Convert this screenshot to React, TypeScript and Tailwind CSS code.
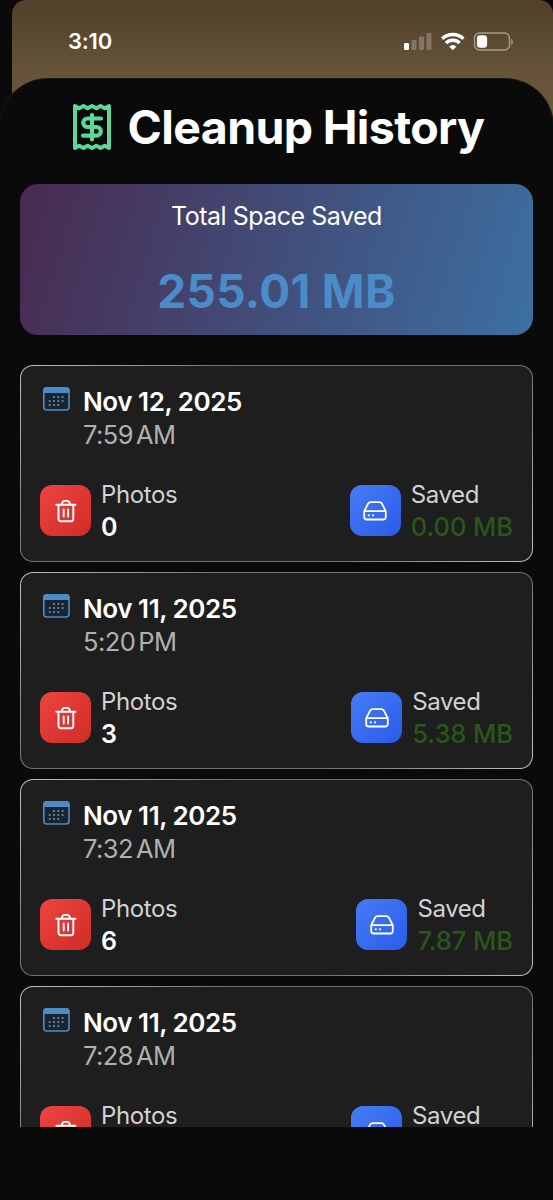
import React from 'react';

const records = [
  { date: 'Nov 12, 2025', time: '7:59', period: 'AM', photos: 0, saved: '0.00 MB' },
  { date: 'Nov 11, 2025', time: '5:20', period: 'PM', photos: 3, saved: '5.38 MB' },
  { date: 'Nov 11, 2025', time: '7:32', period: 'AM', photos: 6, saved: '7.87 MB' },
  { date: 'Nov 11, 2025', time: '7:28', period: 'AM', photos: 4, saved: '6.53 MB' },
];

// x, y of the day dots inside the calendar icon
const days = [
  [11, 10], [15.3, 10], [19.6, 10],
  [6.7, 14], [11, 14], [15.3, 14], [19.6, 14],
  [6.7, 18], [11, 18], [15.3, 18],
];

const ReceiptIcon = () => (
  <svg className="-mt-[2px]" width="40" height="48" viewBox="0 0 40 48" fill="none" stroke="#5fd69c" strokeWidth="4" strokeLinejoin="round" strokeLinecap="round">
    <path d="M3 3v42l4.200-2.200 4.300 2.200 4.200-2.200 4.300 2.200 4.300-2.200 4.200 2.200 4.300-2.200L37 45V3l-4.200 2.200L28.500 3l-4.200 2.200L20 3l-4.300 2.200L11.500 3 7.200 5.200z" />
    <path d="M29 15.500H15.500a4.200 4.200 0 0 0 0 8.500h9a4.300 4.300 0 0 1 0 8.600H11M20 12v24.500" strokeWidth="4.200" />
  </svg>
);

const CalendarIcon = () => (
  <svg width="27" height="24" viewBox="0 0 27 24" fill="none">
    <rect x="0.800" y="0.800" width="25.200" height="22.200" rx="3" fill="#1b242d" stroke="#4a8bc8" strokeWidth="1.600" />
    <path d="M0 6V4a4 4 0 0 1 4-4h18.800a4 4 0 0 1 4 4v2z" fill="#4a8bc8" />
    {days.map(([x, y]) => (
      <circle key={`${x}-${y}`} cx={x} cy={y} r="1.100" fill="#5f8fb8" />
    ))}
  </svg>
);

const TrashIcon = () => (
  <svg width="22" height="24" viewBox="0 0 22 24" fill="none" stroke="white" strokeWidth="1.900" strokeLinecap="round" strokeLinejoin="round">
    <path d="M1.300 5.700h19.200M6.500 5.400l1-2.300a2 2 0 0 1 1.800-1.200h3.200a2 2 0 0 1 1.800 1.200l1 2.300M3.500 5.900v13.900a2.500 2.500 0 0 0 2.500 2.500h9.800a2.500 2.500 0 0 0 2.500-2.500V5.900M8.700 10.500v7M13.100 10.500v7" />
  </svg>
);

const DriveIcon = () => (
  <svg width="24" height="20" viewBox="0 0 24 20" fill="none" stroke="white" strokeWidth="1.800" strokeLinecap="round" strokeLinejoin="round">
    <path d="M1.200 11v5a2.500 2.500 0 0 0 2.500 2.500h16.600a2.500 2.500 0 0 0 2.500-2.500v-5a3 3 0 0 0-.3-1.300l-3.600-7a3 3 0 0 0-2.700-1.600H7.800a3 3 0 0 0-2.700 1.600l-3.600 7a3 3 0 0 0-.3 1.300zM1.500 10.200h21" />
    <path d="M5.800 14.300h.01M10 14.300h.01" strokeWidth="2.200" />
  </svg>
);

const StatusIcons = () => (
  <svg width="112" height="20" viewBox="0 0 112 20" fill="none">
    <rect x="1" y="12" width="5" height="7" rx="1.300" fill="white" />
    <g fill="white" fillOpacity="0.240">
      <rect x="8.500" y="9" width="5" height="10" rx="1.300" />
      <rect x="16" y="5.500" width="5" height="13.500" rx="1.300" />
      <rect x="23.500" y="2" width="5" height="17" rx="1.300" />
    </g>
    <g stroke="white" strokeWidth="3.400">
      <path d="M39.200 7.700a15.500 15.500 0 0 1 21.200 0" />
      <path d="M43 12.100a9.700 9.700 0 0 1 13.600 0" />
    </g>
    <path d="M46.200 15.500a5.400 5.400 0 0 1 7.200 0l-3.600 3.800z" fill="white" />
    <rect x="71.500" y="2" width="35" height="17" rx="5" stroke="white" strokeOpacity="0.450" strokeWidth="1.400" />
    <rect x="73.900" y="4.300" width="10.200" height="12.500" rx="3.300" fill="white" />
    <path d="M108.300 8v6c2-.8 2-5.200 0-6z" fill="white" fillOpacity="0.500" />
  </svg>
);

interface StatProps {
  label: string;
  value: string | number;
  icon: React.ReactNode;
  tile: string;
  valueClass: string;
}

const Stat: React.FC<StatProps> = ({ label, value, icon, tile, valueClass }) => (
  <div className="flex gap-[10px]">
    <div className={`mt-[6px] flex size-[51px] items-center justify-center rounded-[12px] ${tile}`}>{icon}</div>
    <div className="leading-8">
      <div className="text-[24px] tracking-[-0.400px] text-[#d2d2d2]">{label}</div>
      <div className={valueClass}>{value}</div>
    </div>
  </div>
);

const HistoryCard: React.FC<{ record: (typeof records)[number] }> = ({ record }) => (
  <div className="h-[197px] shrink-0 rounded-[13px] bg-[linear-gradient(135deg,#c0c0c0,#707070_30%,#707070_70%,#c0c0c0)] p-px">
    <div className="h-full rounded-[12px] bg-[#1e1e1e] px-[19px] pt-[18px]">
      <div className="flex gap-[13px] pl-[3px]">
        <div className="mt-[3px]">
          <CalendarIcon />
        </div>
        <div className="leading-[33px]">
          <div className="pt-px text-[26px] font-semibold tracking-[-0.450px] text-white">{record.date}</div>
          <div className="flex gap-[3px] text-[25.500px] tracking-[-0.550px] text-[#b0b0b0]">
            <span>{record.time}</span>
            <span>{record.period}</span>
          </div>
        </div>
      </div>
      <div className="mt-[28px] flex justify-between">
        <Stat
          label="Photos"
          value={record.photos}
          icon={<TrashIcon />}
          tile="bg-linear-to-br from-[#ed4441] to-[#cf2b27]"
          valueClass="text-[25px] font-semibold text-white"
        />
        <Stat
          label="Saved"
          value={record.saved}
          icon={<DriveIcon />}
          tile="bg-linear-to-br from-[#477cf5] to-[#2b5ae8]"
          valueClass="text-[25.500px] font-medium tracking-[-0.050px] text-[#285719]"
        />
      </div>
    </div>
  </div>
);

const App: React.FC = () => {
  return (
    <div className="h-[1200px] w-[553px] overflow-hidden bg-[#0a0a0a] pl-3 font-['Inter',sans-serif]">
      {/* Status bar over the dimmed screen behind the sheet */}
      <div className="h-[150px] rounded-t-[14px] bg-linear-to-b from-[#51402a] via-[#66533a] via-50% to-[#6d5b3d] pt-[25px]">
        <div className="flex items-center justify-between pr-[38px] pl-14">
          <span className="pt-px text-[22px] leading-[30px] font-semibold tracking-[-0.200px] text-white">3:10</span>
          <StatusIcons />
        </div>
      </div>

      <main className="relative -mt-[71px] -ml-3 flex h-[1122px] flex-col rounded-t-[48px] bg-[#0a0a0a] px-5 pt-[22px] shadow-[0_0_0_1px_#171717]">
        <header className="flex h-[53px] items-center justify-center gap-4 pl-[3px]">
          <ReceiptIcon />
          <h1 className="text-[46.500px] leading-[53px] font-bold tracking-[-0.650px] whitespace-nowrap text-white">Cleanup History</h1>
        </header>

        <section className="mt-[30px] h-[151px] shrink-0 rounded-[18px] bg-[linear-gradient(106deg,#482a4f,#3c70a3)] pt-[16px] text-center">
          <p className="text-[25px] leading-8 tracking-[-0.500px] text-white">Total Space Saved</p>
          <p className="mt-[29px] text-[46px] leading-[60px] font-bold tracking-[0.300px] text-[#4a8bc8]">255.01 MB</p>
        </section>

        <div className="mt-[30px] flex h-[762px] flex-col gap-[10px] overflow-hidden">
          {records.map((record) => (
            <HistoryCard key={`${record.date} ${record.time}`} record={record} />
          ))}
        </div>
      </main>
    </div>
  );
};

export default App;
